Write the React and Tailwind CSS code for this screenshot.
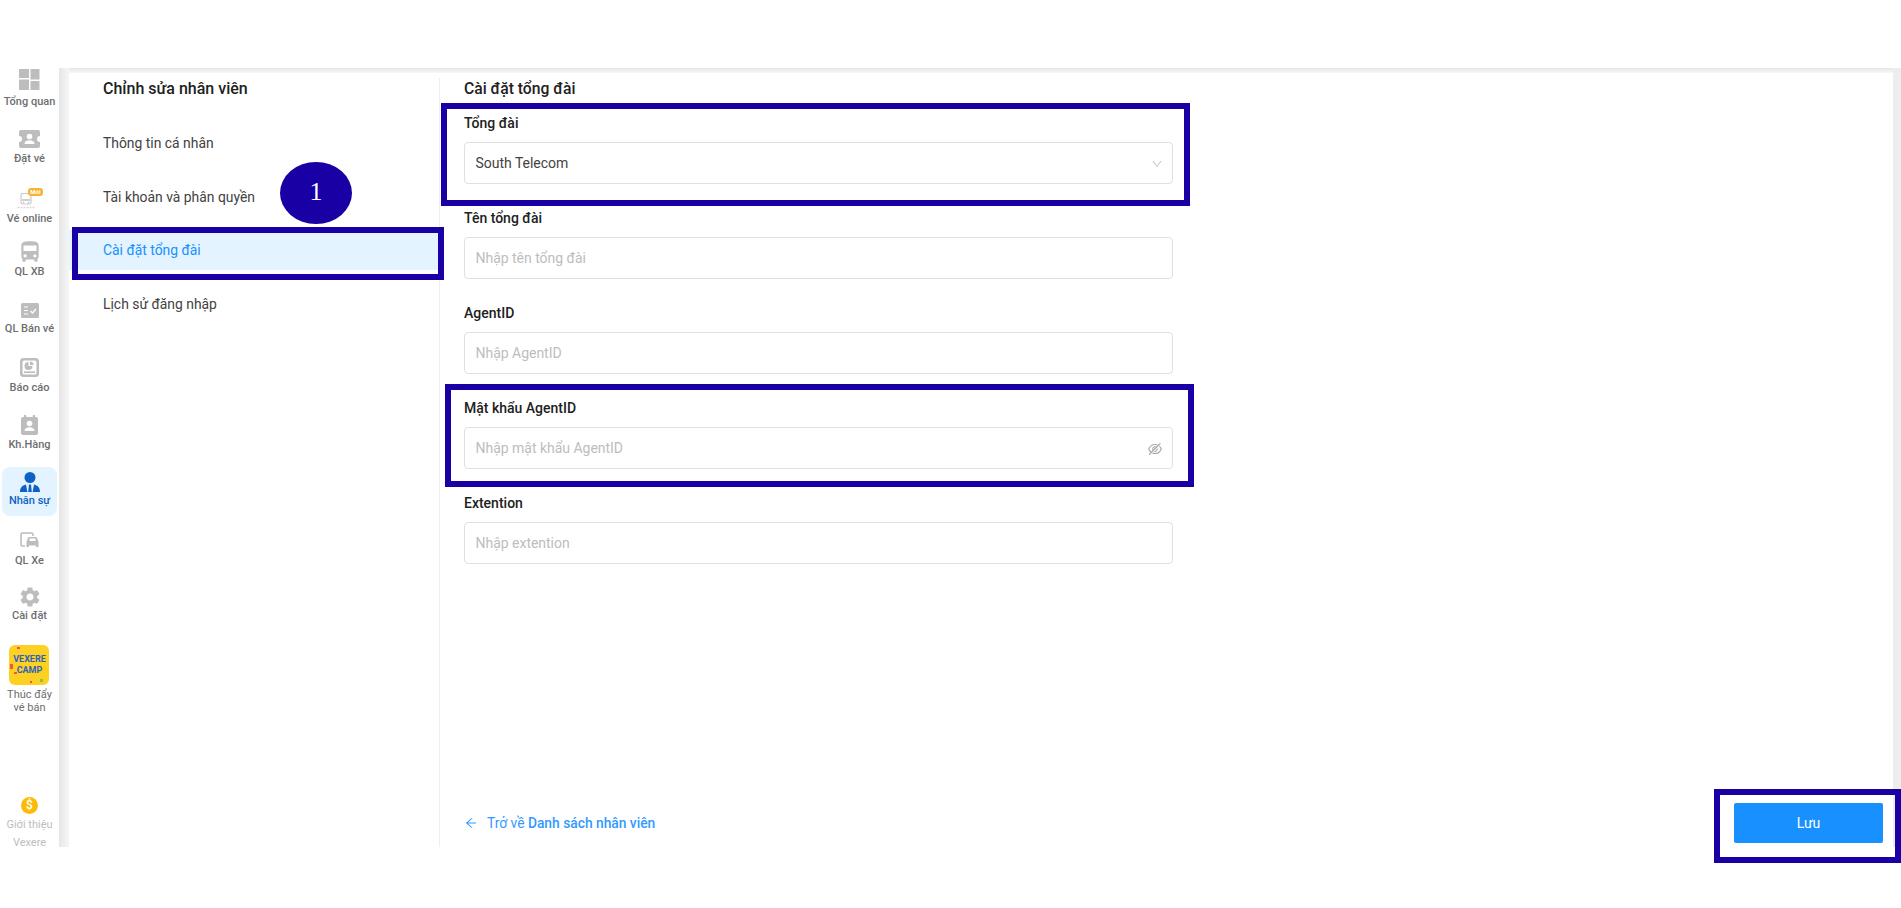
import { AiOutlineArrowLeft, AiOutlineDown, AiOutlineEyeInvisible } from "react-icons/ai";
import { MdDirectionsBus, MdSettings } from "react-icons/md";

const GREY = "#bdbdbd";

const DashboardIcon = () => (
  <svg width="21" height="21" viewBox="0 0 21 21" fill={GREY}>
    <rect x="0" y="0" width="10" height="9" />
    <rect x="11.5" y="0" width="9" height="10.5" />
    <rect x="0" y="10.5" width="10" height="10.5" />
    <rect x="11.5" y="12" width="9" height="9" />
  </svg>
);

const TicketIcon = () => (
  <svg width="21" height="18" viewBox="0 0 21 18">
    <path fill={GREY} d="M2 0h17a2 2 0 0 1 2 2v4a3 3 0 0 0 0 6v4a2 2 0 0 1-2 2H2a2 2 0 0 1-2-2v-4a3 3 0 0 0 0-6V2a2 2 0 0 1 2-2z" />
    <circle cx="10.5" cy="6.5" r="2.8" fill="#fff" />
    <path fill="#fff" d="M5.5 14c0-2.6 2.2-3.8 5-3.8s5 1.2 5 3.8z" />
  </svg>
);

const OnlineIcon = () => (
  <div className="relative w-[21px] h-[21px]">
    <svg className="absolute -left-[2px] top-[5px]" width="18" height="16" viewBox="0 0 18 16">
      <rect x="4" y="0.5" width="10" height="10.5" rx="1.5" fill="#fff" stroke="#c9c9c9" strokeWidth="1.2" />
      <rect x="5" y="6" width="8" height="2" fill="#cfcfcf" />
      <circle cx="6.5" cy="9.5" r="0.8" fill="#bbb" />
      <circle cx="11.5" cy="9.5" r="0.8" fill="#bbb" />
      <path d="M0.5 14.5h17" stroke="#d8d8d8" strokeWidth="1.4" strokeDasharray="2 1" />
    </svg>
    <span className="absolute left-[9px] top-0 w-[15px] h-[8px] rounded-[3px] bg-[#f9b233] text-white text-[6px] leading-[8px] text-center font-bold">Mới</span>
  </div>
);

const SaleIcon = () => (
  <svg width="18" height="15" viewBox="0 0 18 15">
    <rect width="18" height="15" rx="1.5" fill={GREY} />
    <path d="M3 4h4M3 7.5h4M3 11h4" stroke="#fff" strokeWidth="1.2" />
    <path d="M9.5 8l2 2 3.5-4" fill="none" stroke="#fff" strokeWidth="1.3" />
  </svg>
);

const ReportIcon = () => (
  <svg width="19" height="19" viewBox="0 0 19 19">
    <rect width="19" height="19" rx="3.5" fill={GREY} />
    <rect x="2.5" y="2.5" width="14" height="14" rx="1.5" fill="#fff" />
    <path d="M8.5 4a4 4 0 1 0 4 4h-4z" fill={GREY} />
    <path d="M10 3.5V7h3.5A3.5 3.5 0 0 0 10 3.5z" fill={GREY} />
    <path d="M4 14.2h11" stroke={GREY} strokeWidth="1.6" />
  </svg>
);

const ContactIcon = () => (
  <svg width="17" height="20" viewBox="0 0 17 20">
    <rect x="3" y="0" width="2.2" height="4" fill={GREY} />
    <rect x="11.8" y="0" width="2.2" height="4" fill={GREY} />
    <rect x="0" y="2" width="17" height="18" rx="2" fill={GREY} />
    <circle cx="8.5" cy="8.5" r="2.8" fill="#fff" />
    <path d="M3.5 16c0-2.6 2.2-3.8 5-3.8s5 1.2 5 3.8z" fill="#fff" />
  </svg>
);

const StaffIcon = () => (
  <svg width="20" height="20" viewBox="0 0 20 20" fill="#0d62c4">
    <circle cx="10" cy="5.5" r="5.5" />
    <path d="M0 20c0-4.2 2.3-6.6 6-7.4l1.4 7.4zM20 20c0-4.2-2.3-6.6-6-7.4L12.6 20z" />
    <path d="M9 12.5h2l.8 7.5H8.2z" />
  </svg>
);

const CarsIcon = () => (
  <svg width="20" height="16" viewBox="0 0 20 16" fill="none">
    <path d="M5 14H2.5A1.5 1.5 0 0 1 1 12.5v-10A1.5 1.5 0 0 1 2.5 1h9A1.5 1.5 0 0 1 13 2.5V4" stroke={GREY} strokeWidth="1.6" />
    <path d="M8.5 5h8l2 4.5V15h-2.5v-1.5H9V15H6.5V9.5z" fill={GREY} />
    <rect x="9.5" y="6.5" width="6" height="2.5" fill="#fff" />
  </svg>
);

const navItems = [
  { label: "Tổng quan", icon: <DashboardIcon />, box: "h-[49px]", gap: "mb-[5px]" },
  { label: "Đặt vé", icon: <TicketIcon />, box: "h-[57px]", gap: "mb-[4px]" },
  { label: "Vé online", icon: <OnlineIcon />, box: "h-[60px]", gap: "mb-[3px]" },
  { label: "QL XB", icon: <MdDirectionsBus size={26} color={GREY} />, box: "h-[53px]", gap: "mb-0" },
  { label: "QL Bán vé", icon: <SaleIcon />, box: "h-[57px]", gap: "mb-[4px]" },
  { label: "Báo cáo", icon: <ReportIcon />, box: "h-[59px]", gap: "mb-[4px]" },
  { label: "Kh.Hàng", icon: <ContactIcon />, box: "h-[57px] mb-[7px]", gap: "mb-[3px]" },
  { label: "Nhân sự", icon: <StaffIcon />, box: "h-[49px] bg-[#e3f3ff] rounded-lg", gap: "mb-[2px]", active: true },
  { label: "QL Xe", icon: <CarsIcon />, box: "h-[60px]", gap: "mb-[6px]" },
  { label: "Cài đặt", icon: <MdSettings size={24} color={GREY} />, box: "h-[55px]", gap: "mb-0" },
];

const CampLogo = () => (
  <div className="relative w-[40px] h-[40px] rounded-[6px] bg-[#fdd022] flex flex-col items-center justify-center text-[#2a63c0] text-[9px] leading-[11px] font-bold">
    <span>VEXERE</span>
    <span>CAMP</span>
    <i className="absolute left-[8px] top-[2px] w-[3px] h-[2px] bg-[#e0527a]" />
    <i className="absolute left-[1px] top-[19px] w-[3px] h-[5px] bg-[#ec5a3c]" />
    <i className="absolute left-[5px] top-[27px] w-[3px] h-[2px] bg-[#ec5a3c]" />
    <i className="absolute left-[31px] top-[34px] w-[3px] h-[3px] bg-[#8cc152]" />
    <i className="absolute left-[21px] top-[36px] w-[2px] h-[2px] bg-[#e0527a]" />
  </div>
);

const Sidebar = () => (
  <div className="w-[59px] shrink-0 flex flex-col items-center">
    {navItems.map((item) => (
      <div key={item.label} className={`w-[55px] flex flex-col items-center justify-end pb-[8px] ${item.box}`}>
        <div className={item.gap}>{item.icon}</div>
        <span className={`text-[11px] leading-[14px] font-medium whitespace-nowrap ${item.active ? "text-[#0d62c4]" : "text-[#6e6e6e]"}`}>
          {item.label}
        </span>
      </div>
    ))}
    <div className="mt-[14px] flex flex-col items-center">
      <CampLogo />
      <p className="mt-[3px] text-[11px] leading-[13px] text-[#6e6e6e] text-center whitespace-nowrap">Thúc đẩy<br />vé bán</p>
    </div>
    <div className="mt-auto flex flex-col items-center text-[#bdbdbd] text-[11px] leading-[18px] -mb-[5px]">
      <div className="w-[17px] h-[17px] mb-[2px] rounded-full bg-[#fbbc05] text-white text-[12px] leading-[17px] text-center font-medium">$</div>
      <span>Giới thiệu</span>
      <span>Vexere</span>
    </div>
  </div>
);

const Field = ({ label, placeholder, value, icon }) => (
  <div className="w-[709px] mb-[23px]">
    <label className="block h-[22px] leading-[22px] mb-[8px] text-[14px] font-medium text-[#212121]">{label}</label>
    <div className="h-[42px] pl-[10.5px] pr-[9px] pt-[1px] flex items-center justify-between border border-[#e0e0e0] rounded text-[14px] tracking-[-0.02px]">
      <span className={value ? "text-[#424242]" : "text-[#bdbdbd]"}>{value || placeholder}</span>
      {icon}
    </div>
  </div>
);

const App = () => {
  const menu = ["Thông tin cá nhân", "Tài khoản và phân quyền", "Cài đặt tổng đài", "Lịch sử đăng nhập"];

  return (
    <div className="relative w-[1901px] h-[908px] overflow-hidden bg-white font-['Roboto',sans-serif]">
      <div className="h-[68px]" />
      <div className="h-[779px] flex">
        <Sidebar />
        <div className="w-[10px] shrink-0 bg-gradient-to-r from-[#e6e6e6] to-[#f6f6f6]" />

        <div className="flex-1 flex flex-col">
          <div className="h-[5px] bg-gradient-to-b from-[#e6e6e6] to-[#f8f8f8]" />
          <div className="flex-1 flex mt-[5px]">
            {/* MENU */}
            <div className="w-[371px] border-r border-[#eee]">
              <h2 className="pl-[34px] h-[22px] leading-[22px] text-[16px] font-medium text-[#212121]">Chỉnh sửa nhân viên</h2>
              <div className="mt-[23px] flex flex-col gap-[13.5px]">
                {menu.map((name, i) => (
                  <div
                    key={name}
                    className={`h-10 pl-[34px] pt-[1px] flex items-center text-[13.9px] ${i === 2 ? "bg-[#e3f3ff] text-[#1890ff]" : "text-[#424242]"}`}
                  >
                    {name}
                  </div>
                ))}
              </div>
            </div>

            {/* FORM */}
            <div className="flex-1 pl-[24px] pr-[10px] pb-[4px] flex flex-col">
              <h2 className="h-[22px] leading-[22px] text-[15.7px] font-medium text-[#212121] mb-[12px]">Cài đặt tổng đài</h2>
              <Field label="Tổng đài" value="South Telecom" icon={<AiOutlineDown size={12} color="#c4c4c4" />} />
              <Field label="Tên tổng đài" placeholder="Nhập tên tổng đài" />
              <Field label="AgentID" placeholder="Nhập AgentID" />
              <Field label="Mật khẩu AgentID" placeholder="Nhập mật khẩu AgentID" icon={<AiOutlineEyeInvisible size={16} color="#a8a8a8" />} />
              <Field label="Extention" placeholder="Nhập extention" />
              <div className="mt-auto flex items-center justify-between">
                <div className="flex items-center text-[13.8px] text-[#1890ff] opacity-90">
                  <AiOutlineArrowLeft size={14} className="mr-[9px]" />
                  <span>Trở về&nbsp;</span>
                  <span className="font-medium">Danh sách nhân viên</span>
                </div>
                <button className="w-[149px] h-[40px] rounded-[2px] bg-[#1890ff] text-white text-[14px]">Lưu</button>
              </div>
            </div>
          </div>
        </div>

        <div className="w-[8px] shrink-0 bg-[#ededed]" />
      </div>

      {/* annotations over the screenshot */}
      <div className="absolute left-[72px] top-[227px] w-[372px] h-[53px] border-[6px] border-[#1800a5]" />
      <div className="absolute left-[441px] top-[103px] w-[749px] h-[103px] border-[6px] border-[#1800a5]" />
      <div className="absolute left-[445px] top-[384px] w-[749px] h-[103px] border-[6px] border-[#1800a5]" />
      <div className="absolute left-[1714px] top-[789px] w-[187px] h-[74px] border-[6px] border-[#1800a5]" />
      <div className="absolute left-[280px] top-[162px] w-[72px] h-[62px] pb-[3px] rounded-[50%] bg-[#1800a5] text-white flex items-center justify-center text-[26px] font-['Liberation_Serif',serif]">
        1
      </div>
    </div>
  );
};

export default App;
